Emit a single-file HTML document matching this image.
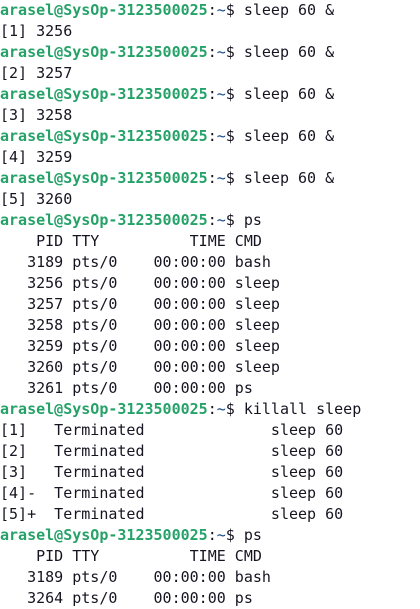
<html><head><style>
body{margin:0;background:#fff;width:420px;height:608px;overflow:hidden}
pre{margin:0;padding:0;font-family:"DejaVu Sans Mono","Liberation Mono",monospace;font-size:15px;line-height:21px;color:#171421;position:relative;top:0px}
.g{color:#26a269;font-weight:bold}.b{color:#12488b}
</style></head><body><pre><span class="g">arasel@SysOp-3123500025</span>:<span class="b">~</span>$ sleep 60 &amp;
[1] 3256
<span class="g">arasel@SysOp-3123500025</span>:<span class="b">~</span>$ sleep 60 &amp;
[2] 3257
<span class="g">arasel@SysOp-3123500025</span>:<span class="b">~</span>$ sleep 60 &amp;
[3] 3258
<span class="g">arasel@SysOp-3123500025</span>:<span class="b">~</span>$ sleep 60 &amp;
[4] 3259
<span class="g">arasel@SysOp-3123500025</span>:<span class="b">~</span>$ sleep 60 &amp;
[5] 3260
<span class="g">arasel@SysOp-3123500025</span>:<span class="b">~</span>$ ps
    PID TTY          TIME CMD
   3189 pts/0    00:00:00 bash
   3256 pts/0    00:00:00 sleep
   3257 pts/0    00:00:00 sleep
   3258 pts/0    00:00:00 sleep
   3259 pts/0    00:00:00 sleep
   3260 pts/0    00:00:00 sleep
   3261 pts/0    00:00:00 ps
<span class="g">arasel@SysOp-3123500025</span>:<span class="b">~</span>$ killall sleep
[1]   Terminated              sleep 60
[2]   Terminated              sleep 60
[3]   Terminated              sleep 60
[4]-  Terminated              sleep 60
[5]+  Terminated              sleep 60
<span class="g">arasel@SysOp-3123500025</span>:<span class="b">~</span>$ ps
    PID TTY          TIME CMD
   3189 pts/0    00:00:00 bash
   3264 pts/0    00:00:00 ps
</pre></body></html>
